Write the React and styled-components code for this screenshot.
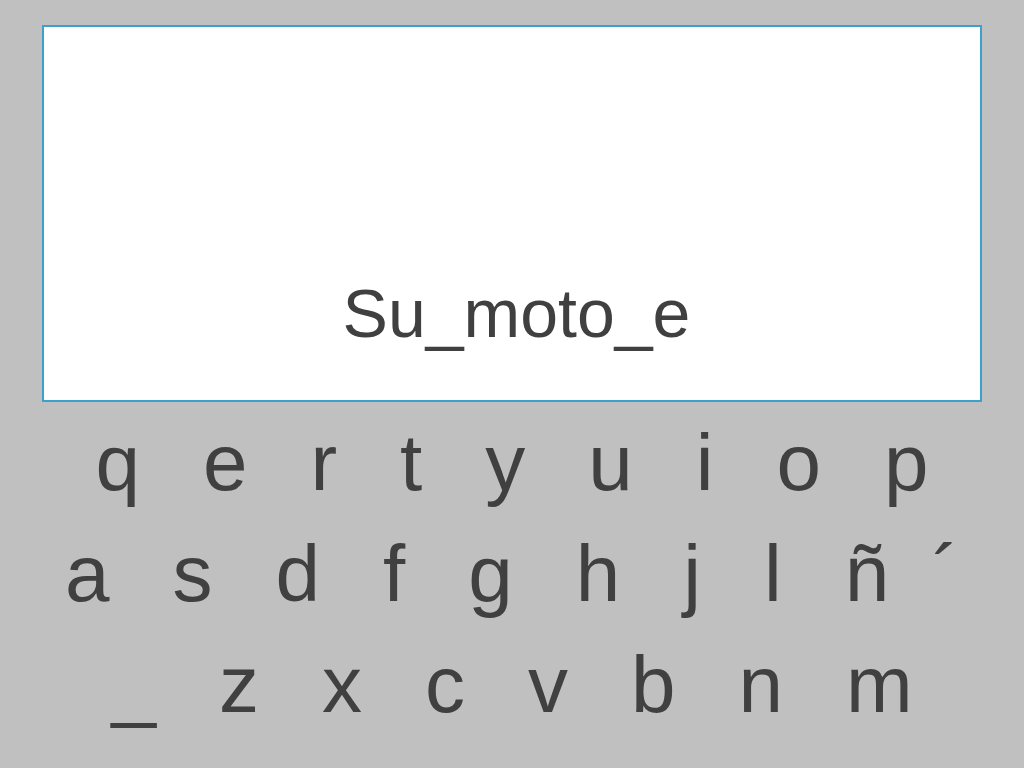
import React from 'react';
import styled, { createGlobalStyle } from 'styled-components';

const GlobalStyle = createGlobalStyle`
  html, body {
    margin: 0;
    padding: 0;
    background: #c0c0c0;
  }
  body {
    font-family: "Liberation Sans", Arial, sans-serif;
    color: #404040;
  }
`;

const Page = styled.div`
  width: 1024px;
  height: 768px;
  padding-top: 25px;
  box-sizing: border-box;
  overflow: hidden;
`;

const Display = styled.div`
  width: 940px;
  height: 377px;
  margin: 0 auto;
  box-sizing: border-box;
  background: #ffffff;
  border: 2px solid #3d9fcc;
  display: flex;
  flex-direction: column;
  justify-content: flex-end;
  align-items: center;
  padding: 0 0 47px 9px;
`;

const Word = styled.div`
  font-size: 68px;
  line-height: 80px;
  white-space: pre;
`;

const Keyboard = styled.div`
  margin-top: 5px;
  display: flex;
  flex-direction: column;
  align-items: center;
`;

const Row = styled.div`
  display: flex;
  justify-content: center;
  gap: 63px;
  font-size: 80px;
  line-height: 111px;
`;

const Key = styled.span`
  display: inline-block;
  margin-left: ${p => (p.$tight ? '-20px' : '0')};
  cursor: pointer;
`;

const rows = [
  ['q', 'e', 'r', 't', 'y', 'u', 'i', 'o', 'p'],
  ['a', 's', 'd', 'f', 'g', 'h', 'j', 'l', 'ñ', '´'],
  ['_', 'z', 'x', 'c', 'v', 'b', 'n', 'm'],
];

export default function App() {
  return (
    <Page>
      <GlobalStyle />
      <Display>
        <Word>Su_moto_e</Word>
      </Display>
      <Keyboard>
        {rows.map((row, i) => (
          <Row key={i}>
            {row.map(k => (
              <Key key={k} $tight={k === '´'}>
                {k}
              </Key>
            ))}
          </Row>
        ))}
      </Keyboard>
    </Page>
  );
}
